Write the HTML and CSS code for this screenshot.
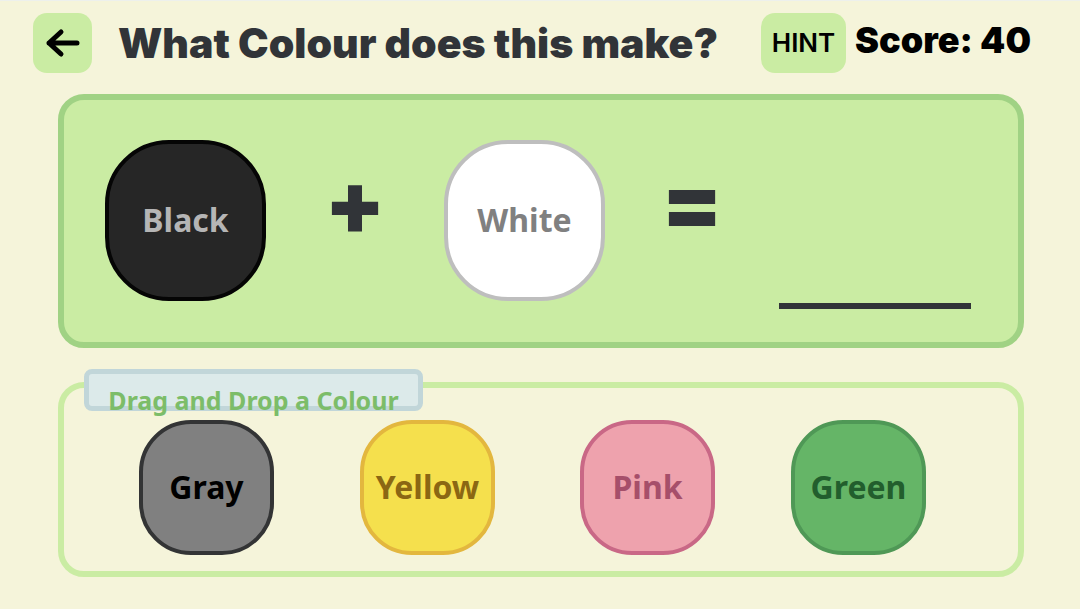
FILE: index.html
```html
<!DOCTYPE html>
<html lang="en">
<head>
<meta charset="utf-8">
<meta name="viewport" content="width=device-width, initial-scale=1">
<title>What Colour does this make?</title>
<link rel="stylesheet" href="styles.css">
</head>
<body>
<header class="topbar">
  <button class="btn btn-back" type="button" aria-label="Back">
    <svg class="arrow" viewBox="0 0 36 30" aria-hidden="true"><path d="M32 15H4M16 4L4 15L16 26"/></svg>
  </button>
  <h1 class="title">What Colour does this make?</h1>
  <button class="btn btn-hint" type="button">HINT</button>
  <p class="score">Score: 40</p>
</header>
<main class="game">
  <section class="equation" aria-label="Equation">
    <div class="swatch swatch-large black">Black</div>
    <span class="operator">+</span>
    <div class="swatch swatch-large white">White</div>
    <span class="operator">=</span>
    <div class="answer" aria-label="Answer"></div>
  </section>
  <section class="choices" aria-labelledby="choices-label">
    <h2 class="tag" id="choices-label">Drag and Drop a Colour</h2>
    <button class="swatch gray" type="button" draggable="true">Gray</button>
    <button class="swatch yellow" type="button" draggable="true">Yellow</button>
    <button class="swatch pink" type="button" draggable="true">Pink</button>
    <button class="swatch green" type="button" draggable="true">Green</button>
  </section>
</main>
</body>
</html>
```
FILE: styles.css
```css
* { box-sizing: border-box; }
html { background: #f5f4da; }
body {
  margin: 0;
  border-top: 1px solid #edf0ec;
  color: #313438;
  font-family: "Noto Sans", sans-serif;
}
.topbar {
  display: flex;
  align-items: center;
  padding: 12px 32px 0 33px;
}
.btn {
  display: flex;
  align-items: center;
  justify-content: center;
  height: 60px;
  padding: 0;
  border: 0;
  border-radius: 14px;
  background: #caeca3;
  color: #000;
  cursor: pointer;
}
.btn-back { width: 59px; }
.btn-hint {
  width: 85px;
  margin-left: auto;
  font: 600 26px/30px Inter, sans-serif;
}
.arrow {
  width: 36px;
  height: 30px;
  fill: none;
  stroke: #000;
  stroke-width: 5;
  stroke-linecap: round;
  stroke-linejoin: round;
}
.title {
  margin: 0 0 0 26px;
  font: 900 41px/48px Inter, sans-serif;
  white-space: nowrap;
}
.score {
  width: 193px;
  margin: 0 0 6px 9px;
  color: #000;
  font: 900 36px/40px Inter, sans-serif;
  white-space: nowrap;
}
.game {
  display: grid;
  gap: 34px;
  padding: 21px 56px 32px 58px;
}
.equation {
  display: grid;
  grid-template-columns: 161px 178fr 161px 174fr 192px;
  padding: 40px 47px 33px 41px;
  border: 6px solid #a0d284;
  border-radius: 26px;
  background: #caeca3;
}
.swatch {
  display: flex;
  align-items: center;
  justify-content: center;
  width: 135px;
  height: 135px;
  padding: 0 0 2px;
  border: 4px solid;
  border-radius: 52px;
  font: 700 32px/40px "Noto Sans", sans-serif;
}
.swatch-large {
  width: 161px;
  height: 161px;
  border-radius: 64px;
}
.operator {
  padding-top: 12px;
  font: 900 88px/100px Inter, sans-serif;
  text-align: center;
}
.answer {
  height: 169px;
  border-bottom: 6px solid #313438;
}
.choices {
  position: relative;
  display: grid;
  grid-template-columns: 221fr 220fr 211fr 135px;
  padding: 32px 92px 16px 75px;
  border: 6px solid #caeca3;
  border-radius: 26px;
}
.tag {
  position: absolute;
  top: -19px;
  left: 20px;
  height: 42px;
  width: 339px;
  margin: 0;
  padding: 8px 0 0;
  border: 5px solid #c1d6d9;
  border-radius: 8px;
  background: #dceaea;
  color: #7cbd69;
  font: 700 25px/36px "Noto Sans", sans-serif;
  text-align: center;
  white-space: nowrap;
}
.black { border-color: #050505; background: #262626; color: #b5b5b5; }
.white { border-color: #bebebe; background: #fff; color: #808080; }
.gray { border-color: #333435; background: #808080; color: #000; }
.yellow { border-color: #e3b73e; background: #f5e04d; color: #8b6713; }
.pink { border-color: #c96886; background: #eea2ad; color: #a64f6a; }
.green { border-color: #4f9856; background: #65b567; color: #225e2d; }
```
